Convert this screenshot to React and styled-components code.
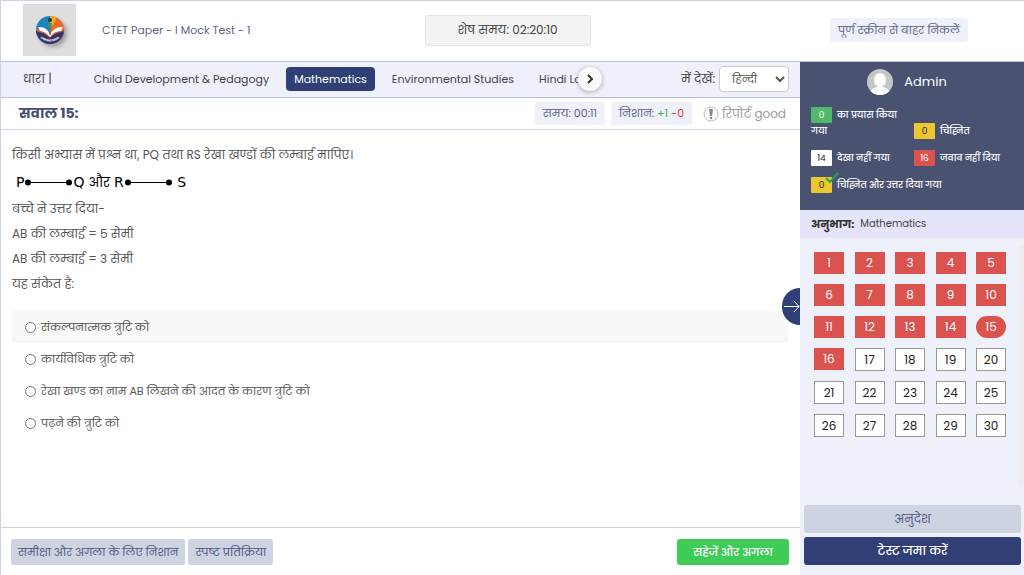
import styled, { createGlobalStyle, css } from "styled-components";

const GlobalStyle = createGlobalStyle`
    *{
        box-sizing: border-box;
    }
    body{
        margin: 0;
        background-color: #fff;
        color: #444;
        font-family: Poppins, Inter, "Noto Sans Devanagari", "Noto Sans", sans-serif;
        font-size: 12px;
    }
    button, select, input{
        font: inherit;
    }
    h1, h2, p{
        margin: 0;
        font-weight: 400;
    }
`

const Page = styled.div`
    display: flex;
    flex-direction: column;
    height: 100vh;
    border-top: 1px solid #cdd2e6;
    border-left: 1px solid #cdd2e6;
`

const Header = styled.header`
    display: grid;
    grid-template-columns: 1fr auto 1fr;
    align-items: center;
    height: 61px;
    flex: none;
    padding: 0 32px 2px 22px;
    border-bottom: 1px solid #b7c0da;
`

const Brand = styled.div`
    display: flex;
    align-items: center;
    gap: 26px;

    svg{
        display: block;
    }
    h1{
        font-size: 11px;
        color: #5c6484;
        white-space: nowrap;
    }
`

const Timer = styled.div`
    min-width: 166px;
    padding: 5px 12px 6px;
    border: 1px solid #e4e4e4;
    border-radius: 3px;
    background-color: #f3f3f3;
    font-size: 12px;
    line-height: 18px;
    text-align: center;
`

const ExitButton = styled.button`
    justify-self: end;
    margin-right: 24px;
    padding: 0 8px;
    border: 0;
    border-radius: 3px;
    background-color: #eef0fa;
    color: #5c6484;
    font-size: 11px;
    line-height: 24px;
`

const Body = styled.div`
    display: flex;
    flex: 1;
    min-height: 0;
`

const Main = styled.main`
    display: flex;
    flex-direction: column;
    flex: 1;
    min-width: 0;
`

const SectionBar = styled.nav`
    display: flex;
    align-items: center;
    height: 36px;
    padding: 0 11px 2px 22px;
    border-bottom: 1px solid #b7c0da;
    background-color: #eef0fa;
    font-size: 12px;
`

const Tabs = styled.div`
    display: flex;
    gap: 9px;
    width: 492px;
    margin-left: 34px;
    overflow: hidden;
`

const Tab = styled.button`
    flex: none;
    padding: 0 8px;
    border: 0;
    border-radius: 4px;
    background-color: ${({ $active }) => ($active ? "#303f75" : "transparent")};
    color: ${({ $active }) => ($active ? "#fff" : "#444")};
    font-size: 11px;
    line-height: 24px;
`

const NextTabs = styled.button`
    display: flex;
    align-items: center;
    justify-content: center;
    flex: none;
    width: 24px;
    height: 24px;
    padding: 0;
    border: 0;
    border-radius: 50%;
    background-color: #fafafa;
    box-shadow: 0 1px 5px rgba(0, 0, 0, 0.3);
`

const Language = styled.div`
    display: flex;
    align-items: center;
    gap: 4px;
    margin-left: auto;

    select{
        width: 70px;
        height: 26px;
        padding: 0 0 0 8px;
        border: 1px solid #ccc;
        border-radius: 4px;
        background-color: #fff;
        color: #555;
        font-size: 11px;
    }
`

const QuestionBar = styled.div`
    display: flex;
    align-items: center;
    gap: 6px;
    height: 32px;
    padding: 0 14px 0 18px;
    border-bottom: 1px solid #d3d8e8;

    h2{
        margin-right: auto;
        font-size: 14px;
        font-weight: 700;
        color: #454e73;
    }
`

const Chip = styled.span`
    padding: 0 8px;
    border-radius: 3px;
    background-color: #eef0fa;
    color: #5c6484;
    font-size: 11px;
    line-height: 23px;
`

const Plus = styled.span`
    color: #35b84b;
`

const Minus = styled.span`
    color: #ee3434;
`

const Report = styled.button`
    display: flex;
    align-items: center;
    gap: 3px;
    margin-left: 5px;
    padding: 0;
    border: 0;
    background: none;
    color: #999;
    font-size: 12px;
`

const Question = styled.section`
    flex: 1;
    padding: 12px 12px 0 11px;
    color: #555;
    line-height: 25px;
`

const Segments = styled.p`
    display: flex;
    align-items: center;
    height: 29px;
    padding: 2px 0 0 4px;
    color: #000;
    font-family: "DejaVu Sans", Poppins, sans-serif;
    font-size: 14px;
`

const Connective = styled.span`
    margin: 0 4px;
    font-size: 13px;
`

const Options = styled.div`
    display: flex;
    flex-direction: column;
    margin-top: 15px;
`

const Option = styled.label`
    display: flex;
    align-items: center;
    gap: 5px;
    height: 32px;
    padding-left: 13px;
    background-color: ${({ $hover }) => ($hover ? "#f7f8f8" : "transparent")};
    font-size: 11px;

    input{
        width: 11px;
        height: 11px;
        margin: 0;
    }
`

const Footer = styled.footer`
    display: flex;
    gap: 3px;
    padding: 11px 11px 10px 10px;
    border-top: 1px solid #cdd2e0;
`

const tones = {
    grey: css`
        background-color: #ced3e2;
        color: #50587c;
    `,
    green: css`
        margin-left: auto;
        background-color: #3ecb58;
        color: #fff;
        font-weight: 500;
    `,
    navy: css`
        background-color: #303f75;
        color: #fff;
        font-weight: 500;
    `,
}

const Button = styled.button`
    min-width: ${({ $wide }) => ($wide ? "112px" : "0")};
    padding: 0 7px;
    border: 0;
    border-radius: 3px;
    font-size: 11px;
    line-height: 26px;
    ${({ $tone }) => tones[$tone]}
`

const Sidebar = styled.aside`
    position: relative;
    display: flex;
    flex-direction: column;
    flex: none;
    width: 224px;
    background-color: #eef0fa;
`

const Toggle = styled.button`
    position: absolute;
    top: 226px;
    left: -18px;
    display: flex;
    align-items: center;
    width: 18px;
    height: 37px;
    padding: 0 0 0 2px;
    border: 0;
    border-radius: 18px 0 0 18px;
    background-color: #303f75;
`

const Profile = styled.div`
    height: 148px;
    padding: 7px 11px 0;
    background-color: #4a5272;
    color: #fff;
`

const User = styled.div`
    display: flex;
    align-items: center;
    justify-content: center;
    gap: 11px;
    margin-bottom: 12px;
    padding-right: 10px;
    font-size: 13px;

    svg{
        display: block;
    }
`

const Legend = styled.ul`
    display: grid;
    grid-template-columns: 103px 1fr;
    align-items: end;
    row-gap: 11px;
    margin: 0;
    padding: 0;
    list-style: none;
    font-size: 9px;
    font-weight: 500;
    line-height: 16px;
`

const LegendItem = styled.li`
    grid-column: ${({ $full }) => ($full ? "1 / -1" : "auto")};
    padding-right: ${({ $wrap }) => ($wrap ? "10px" : "0")};
    white-space: ${({ $wrap }) => ($wrap ? "normal" : "nowrap")};
`

const Count = styled.span`
    position: relative;
    display: inline-block;
    width: 21px;
    margin-right: 5px;
    border-radius: 1px;
    background-color: ${({ $bg }) => $bg};
    color: ${({ $light }) => ($light ? "#fff" : "#222")};
    font-weight: 400;
    text-align: center;

    svg{
        position: absolute;
        top: -5px;
        right: -7px;
    }
`

const Subject = styled.div`
    display: flex;
    align-items: center;
    gap: 6px;
    height: 28px;
    padding: 0 11px;
    background-color: #e4e5fa;
    font-size: 10px;

    strong{
        color: #333;
        font-size: 11px;
    }
`

const Palette = styled.div`
    display: grid;
    grid-template-columns: repeat(5, 30px);
    justify-content: space-between;
    align-content: start;
    gap: 10px 0;
    flex: 1;
    margin: 8px 0 18px;
    padding: 6px 13px 0 14px;
    border-right: 5px solid #ececee;
`

const Cell = styled.button`
    height: ${({ $missed }) => ($missed ? "22px" : "23px")};
    padding: 0;
    border: ${({ $missed }) => ($missed ? "0" : "1px solid #999")};
    border-radius: ${({ $current }) => ($current ? "11px" : "0")};
    background-color: ${({ $missed }) => ($missed ? "#da534f" : "#fff")};
    color: ${({ $missed }) => ($missed ? "#fff" : "#222")};
    font-size: 12px;
    line-height: 20px;
`

const Actions = styled.div`
    display: flex;
    flex-direction: column;
    gap: 4px;
    padding: 0 3px 10px 4px;

    button{
        font-size: 12px;
        line-height: 28px;
    }
`

const Logo = () => (
    <svg width="53" height="52" viewBox="0 0 53 52" aria-label="Logo">
        <defs>
            <filter id="logoShadow" x="-30%" y="-30%" width="170%" height="170%">
                <feGaussianBlur stdDeviation="2" />
            </filter>
            <clipPath id="logoDisc">
                <circle cx="27" cy="26" r="14" />
            </clipPath>
            <path id="logoText" d="M15 32 Q27 43 39 32" />
        </defs>
        <rect width="53" height="52" fill="#dededf" />
        <circle cx="30" cy="29" r="14" fill="#9e9c9f" filter="url(#logoShadow)" />
        <g clipPath="url(#logoDisc)">
            <path d="M12 11h15v30H12z" fill="#1d83bd" />
            <path d="M27 11h15v30H27z" fill="#e86925" />
            <path d="M27 12l7 1-4 8-3 3z" fill="#f5ac24" />
            <path d="M12 27q8 0 15 6 8-6 15-6v15H12z" fill="#313669" />
            <path d="M13 25q9-1 14 7 6-8 14-7l-2 3q-7 0-12 6-6-6-12-6z" fill="#dd5a3d" />
            <path d="M15 23q9-1 12 8 4-9 13-8l-2 4q-7 0-11 6-5-6-10-6z" fill="#fff" />
            <path d="M27 22v9" stroke="#54637b" />
            <circle cx="27" cy="16" r="2" fill="#24334a" />
            <path d="M25 19h4l-1 5h-2z" fill="#36945b" />
        </g>
        <text fill="#fff" fontSize="3" fontWeight="700">
            <textPath href="#logoText" startOffset="50%" textAnchor="middle">LINKING INDIA</textPath>
        </text>
    </svg>
)

const Avatar = () => (
    <svg width="26" height="26" viewBox="0 0 26 26" aria-hidden="true">
        <clipPath id="avatarDisc">
            <circle cx="13" cy="13" r="13" />
        </clipPath>
        <g clipPath="url(#avatarDisc)">
            <rect width="26" height="26" fill="#c6c6c6" />
            <ellipse cx="13" cy="11" rx="6" ry="7" fill="#fff" />
            <path d="M3 26q0-7 7-8l3-2 3 2q7 1 7 8z" fill="#fff" />
        </g>
    </svg>
)

const Line = () => (
    <svg width="49" height="7" viewBox="0 0 49 7" aria-hidden="true">
        <path d="M4 3.5h41" stroke="#000" />
        <circle cx="4" cy="3.5" r="3" />
        <circle cx="45" cy="3.5" r="3" />
    </svg>
)

const tabs = ["Child Development & Pedagogy", "Mathematics", "Environmental Studies", "Hindi Language"]

const options = [
    "संकल्पनात्मक त्रुटि को",
    "कार्यविधिक त्रुटि को",
    "रेखा खण्ड का नाम AB लिखने की आदत के कारण त्रुटि को",
    "पढ़ने की त्रुटि को",
]

const cells = Array.from({ length: 30 }, (_, i) => i + 1)

const App = () => {
    return (
        <>
            <GlobalStyle />
            <Page>
                <Header>
                    <Brand>
                        <Logo />
                        <h1>CTET Paper - I Mock Test - 1</h1>
                    </Brand>
                    <Timer>शेष समय: 02:20:10</Timer>
                    <ExitButton>पूर्ण स्क्रीन से बाहर निकलें</ExitButton>
                </Header>
                <Body>
                    <Main>
                        <SectionBar>
                            <span>धारा |</span>
                            <Tabs>
                                {tabs.map((tab) => (
                                    <Tab key={tab} $active={tab === "Mathematics"}>{tab}</Tab>
                                ))}
                            </Tabs>
                            <NextTabs aria-label="Next sections">
                                <svg width="8" height="12" viewBox="0 0 8 12">
                                    <path d="M2 2l4 4-4 4" fill="none" stroke="#333" strokeWidth="2" />
                                </svg>
                            </NextTabs>
                            <Language>
                                <label htmlFor="language">में देखें:</label>
                                <select id="language" defaultValue="hi">
                                    <option value="hi">हिन्दी</option>
                                    <option value="en">English</option>
                                </select>
                            </Language>
                        </SectionBar>
                        <QuestionBar>
                            <h2>सवाल 15:</h2>
                            <Chip>समय: 00:11</Chip>
                            <Chip>निशान: <Plus>+1</Plus> <Minus>-0</Minus></Chip>
                            <Report>
                                <svg width="16" height="16" viewBox="0 0 16 16" aria-hidden="true">
                                    <circle cx="8" cy="8" r="7" fill="none" stroke="#bbb" />
                                    <path d="M6 3h4L9 10H7z" fill="#888" />
                                    <circle cx="8" cy="12" r="1.3" fill="#888" />
                                </svg>
                                रिपोर्ट good
                            </Report>
                        </QuestionBar>
                        <Question>
                            <p>किसी अभ्यास में प्रश्न था, PQ तथा RS रेखा खण्डों की लम्बाई मापिए।</p>
                            <Segments>
                                P<Line />Q<Connective>और</Connective>R<Line />&nbsp;S
                            </Segments>
                            <p>बच्चे ने उत्तर दिया-</p>
                            <p>AB की लम्बाई = 5 सेमी</p>
                            <p>AB की लम्बाई = 3 सेमी</p>
                            <p>यह संकेत है:</p>
                            <Options>
                                {options.map((option, i) => (
                                    <Option key={option} $hover={i === 0}>
                                        <input type="radio" name="answer" />
                                        {option}
                                    </Option>
                                ))}
                            </Options>
                        </Question>
                        <Footer>
                            <Button $tone="grey">समीक्षा और अगला के लिए निशान</Button>
                            <Button $tone="grey">स्पष्ट प्रतिक्रिया</Button>
                            <Button $tone="green" $wide>सहेजें और अगला</Button>
                        </Footer>
                    </Main>
                    <Sidebar>
                        <Toggle aria-label="Hide panel">
                            <svg width="16" height="14" viewBox="0 0 16 14">
                                <path d="M0 6.5h15M10 1l5 5.5-5 5.500" fill="none" stroke="#fff" />
                            </svg>
                        </Toggle>
                        <Profile>
                            <User>
                                <Avatar />
                                <span>Admin</span>
                            </User>
                            <Legend>
                                <LegendItem $wrap><Count $bg="#51b96b" $light>0</Count>का प्रयास किया गया</LegendItem>
                                <LegendItem><Count $bg="#edc731">0</Count>चिह्नित</LegendItem>
                                <LegendItem><Count $bg="#fff">14</Count>देखा नहीं गया</LegendItem>
                                <LegendItem><Count $bg="#da534f" $light>16</Count>जवाब नहीं दिया</LegendItem>
                                <LegendItem $full>
                                    <Count $bg="#edc731">
                                        0
                                        <svg width="14" height="12" viewBox="0 0 14 12" aria-hidden="true">
                                            <path d="M1 6l4 4 8-9" fill="none" stroke="#23a352" strokeWidth="2" />
                                        </svg>
                                    </Count>
                                    चिह्नित और उत्तर दिया गया
                                </LegendItem>
                            </Legend>
                        </Profile>
                        <Subject><strong>अनुभाग:</strong>Mathematics</Subject>
                        <Palette>
                            {cells.map((n) => (
                                <Cell key={n} $missed={n <= 16} $current={n === 15}>{n}</Cell>
                            ))}
                        </Palette>
                        <Actions>
                            <Button $tone="grey">अनुदेश</Button>
                            <Button $tone="navy">टेस्ट जमा करें</Button>
                        </Actions>
                    </Sidebar>
                </Body>
            </Page>
        </>
    )
}

export default App;
